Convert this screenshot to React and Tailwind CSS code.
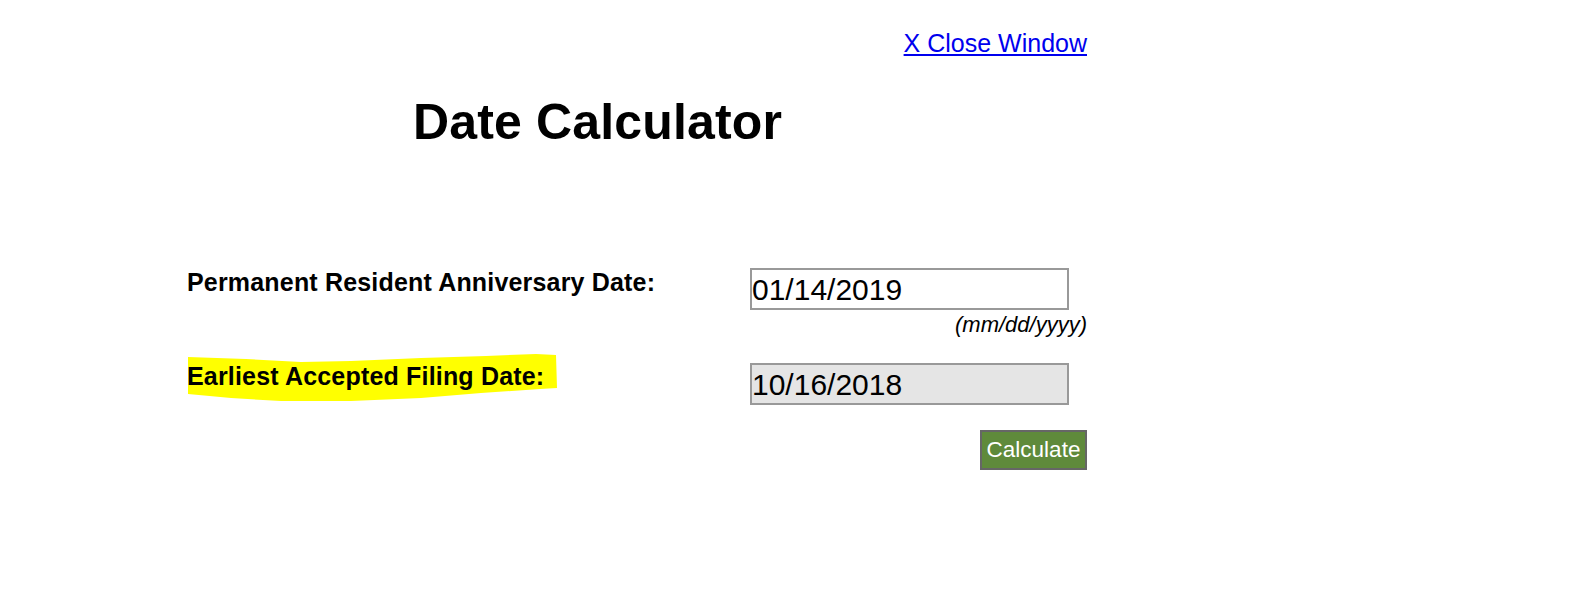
import React, { useState } from "react";

function Highlight() {
  // marker-style yellow stroke behind the label
  return (
    <svg
      className="absolute left-[-1px] top-[-9px]"
      width="374"
      height="52"
      viewBox="0 0 374 52"
    >
      <path
        d="M2 4 L60 6 L115 9 L165 8 L235 5 L300 3 L350 1 L370 2 L371 35 L354 36 L295 40 L235 45 L165 48 L95 48 L45 45 L2 41 Z"
        fill="#ffff00"
      />
    </svg>
  );
}

export default function App() {
  const [anniversary, setAnniversary] = useState("01/14/2019");
  const [filing] = useState("10/16/2018");

  return (
    <div className="min-h-[593px] bg-white text-black font-['Liberation_Sans',Arial,sans-serif]">
      <div className="ml-[187px] w-[900px]">
        <div className="flex justify-end pt-[29px]">
          <a
            href="#"
            className="text-[25px] leading-[29px] text-[#0000ee] underline"
          >
            X Close Window
          </a>
        </div>

        <h1 className="ml-[226px] mt-[35px] text-[50px] leading-[58px] font-bold tracking-[0.15px]">
          Date Calculator
        </h1>

        <div className="mt-[117px] grid grid-cols-[563px_1fr]">
          <div className="text-[25px] leading-[29px] font-bold tracking-[0.18px]">
            Permanent Resident Anniversary Date:
          </div>
          <div className="flex flex-col">
            <input
              type="text"
              value={anniversary}
              onChange={(e) => setAnniversary(e.target.value)}
              className="w-[319px] h-[42px] border-2 border-[#999999] bg-white px-0 text-[30px] text-black outline-none"
            />
            <span className="mt-[2px] text-right text-[22px] leading-[25px] italic">
              (mm/dd/yyyy)
            </span>
          </div>

          <div className="mt-[25px]">
            <div className="relative inline-block">
              <Highlight />
              <span className="relative text-[25px] leading-[29px] font-bold tracking-[0.18px]">
                Earliest Accepted Filing Date:
              </span>
            </div>
          </div>
          <div className="mt-[26px] flex flex-col">
            <input
              type="text"
              value={filing}
              readOnly
              className="w-[319px] h-[42px] border-2 border-[#999999] bg-[#e5e5e5] px-0 text-[30px] text-black outline-none"
            />
            <div className="mt-[25px] flex justify-end">
              <button
                type="button"
                className="w-[107px] h-[40px] border-2 border-[#666666] bg-[#5f8a3b] text-[22.5px] leading-[36px] text-white text-center"
              >
                Calculate
              </button>
            </div>
          </div>
        </div>
      </div>
    </div>
  );
}
